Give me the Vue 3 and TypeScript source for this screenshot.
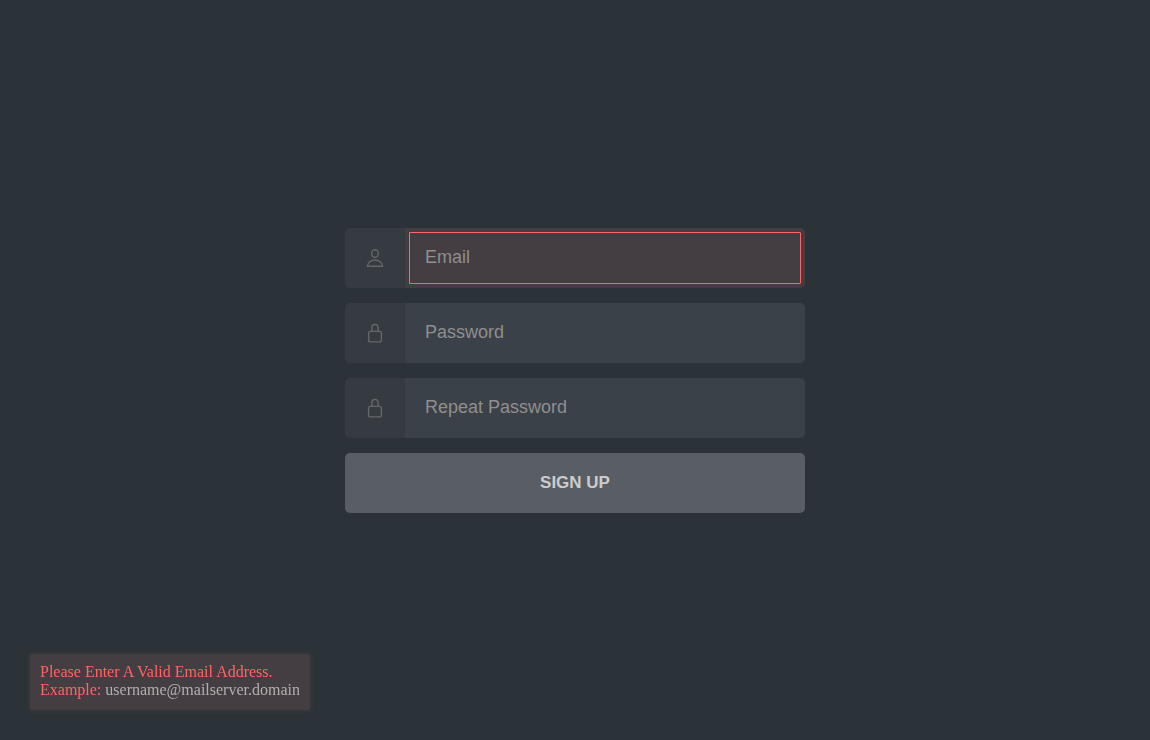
<script setup lang="ts">
import { ref } from 'vue'

interface Field {
  id: string
  label: string
  type: string
  icon: 'user' | 'lock'
  invalid: boolean
}

const fields: Field[] = [
  { id: 'email', label: 'Email', type: 'email', icon: 'user', invalid: true },
  { id: 'password', label: 'Password', type: 'password', icon: 'lock', invalid: false },
  { id: 'repeat', label: 'Repeat Password', type: 'password', icon: 'lock', invalid: false },
]

const values = ref<Record<string, string>>({ email: '', password: '', repeat: '' })
</script>

<template>
  <main class="page">
    <form class="form" novalidate @submit.prevent>
      <div v-for="field in fields" :key="field.id" class="field">
        <label class="field-icon" :for="field.id" :aria-label="field.label">
          <svg v-if="field.icon === 'user'" viewBox="0 0 20 20" aria-hidden="true">
            <ellipse cx="10" cy="5.6" rx="3.4" ry="3.9" />
            <path d="M2.5 18.2c0-3.8 3.3-6.2 7.5-6.2s7.5 2.4 7.5 6.2z" />
          </svg>
          <svg v-else viewBox="0 0 20 20" aria-hidden="true">
            <rect x="3.6" y="8.4" width="12.8" height="10.5" rx="2" />
            <path d="M6.9 8.4V4.6a3.1 3.2 0 0 1 6.2 0v3.8" />
          </svg>
        </label>
        <input
          :id="field.id"
          v-model="values[field.id]"
          class="field-input"
          :class="{ invalid: field.invalid }"
          :type="field.type"
          :placeholder="field.label"
          :aria-invalid="field.invalid"
        />
      </div>
      <button class="submit" type="submit">SIGN UP</button>
    </form>

    <div class="message" role="alert">
      Please Enter A Valid Email Address.<br />
      Example: <span class="example">username@mailserver.domain</span>
    </div>
  </main>
</template>

<style>
body {
  background: #2c3338;
}
</style>

<style scoped>
.page {
  box-sizing: border-box;
  min-height: 100vh;
  display: flex;
  align-items: center;
  justify-content: center;
  background: #2c3338;
}

.form {
  width: 40%;
  min-width: 280px;
  display: flex;
  flex-direction: column;
  gap: 15px;
  font-family: "Liberation Sans", Arial, sans-serif;
}

.field {
  display: flex;
  height: 60px;
}

.field-icon {
  flex: 0 0 60px;
  display: flex;
  align-items: center;
  justify-content: center;
  background: #363b41;
  border-radius: 5px 0 0 5px;
  cursor: pointer;
}

.field-icon svg {
  width: 20px;
  height: 20px;
  fill: none;
  stroke: #64686b;
  stroke-width: 1.4;
}

.field-input {
  box-sizing: border-box;
  flex: 1;
  min-width: 0;
  margin: 0;
  padding: 0 20px;
  border: 0;
  border-radius: 0 5px 5px 0;
  background: #3b4148;
  color: #c6c6c6;
  font: 18px "Liberation Sans", Arial, sans-serif;
}

.field-input::placeholder {
  color: #8f8f8f;
  opacity: 1;
}

.field-input.invalid {
  background: #443d41;
  outline: 1px solid #ff6565;
  outline-offset: -5px;
}

.submit {
  height: 60px;
  margin: 0;
  padding: 0 20px;
  border: 0;
  border-radius: 5px;
  background: #595e65;
  color: #cccccc;
  font: bold 17px "Liberation Sans", Arial, sans-serif;
  cursor: pointer;
}

.message {
  position: fixed;
  left: 30px;
  bottom: 30px;
  padding: 9px 10px 11px;
  border-radius: 2px;
  background: #443d41;
  box-shadow: 0 0 5px #443d41;
  color: #ff6565;
  font: 16px/18px "Liberation Serif", "Times New Roman", serif;
}

.example {
  color: #b0b0b0;
}
</style>
